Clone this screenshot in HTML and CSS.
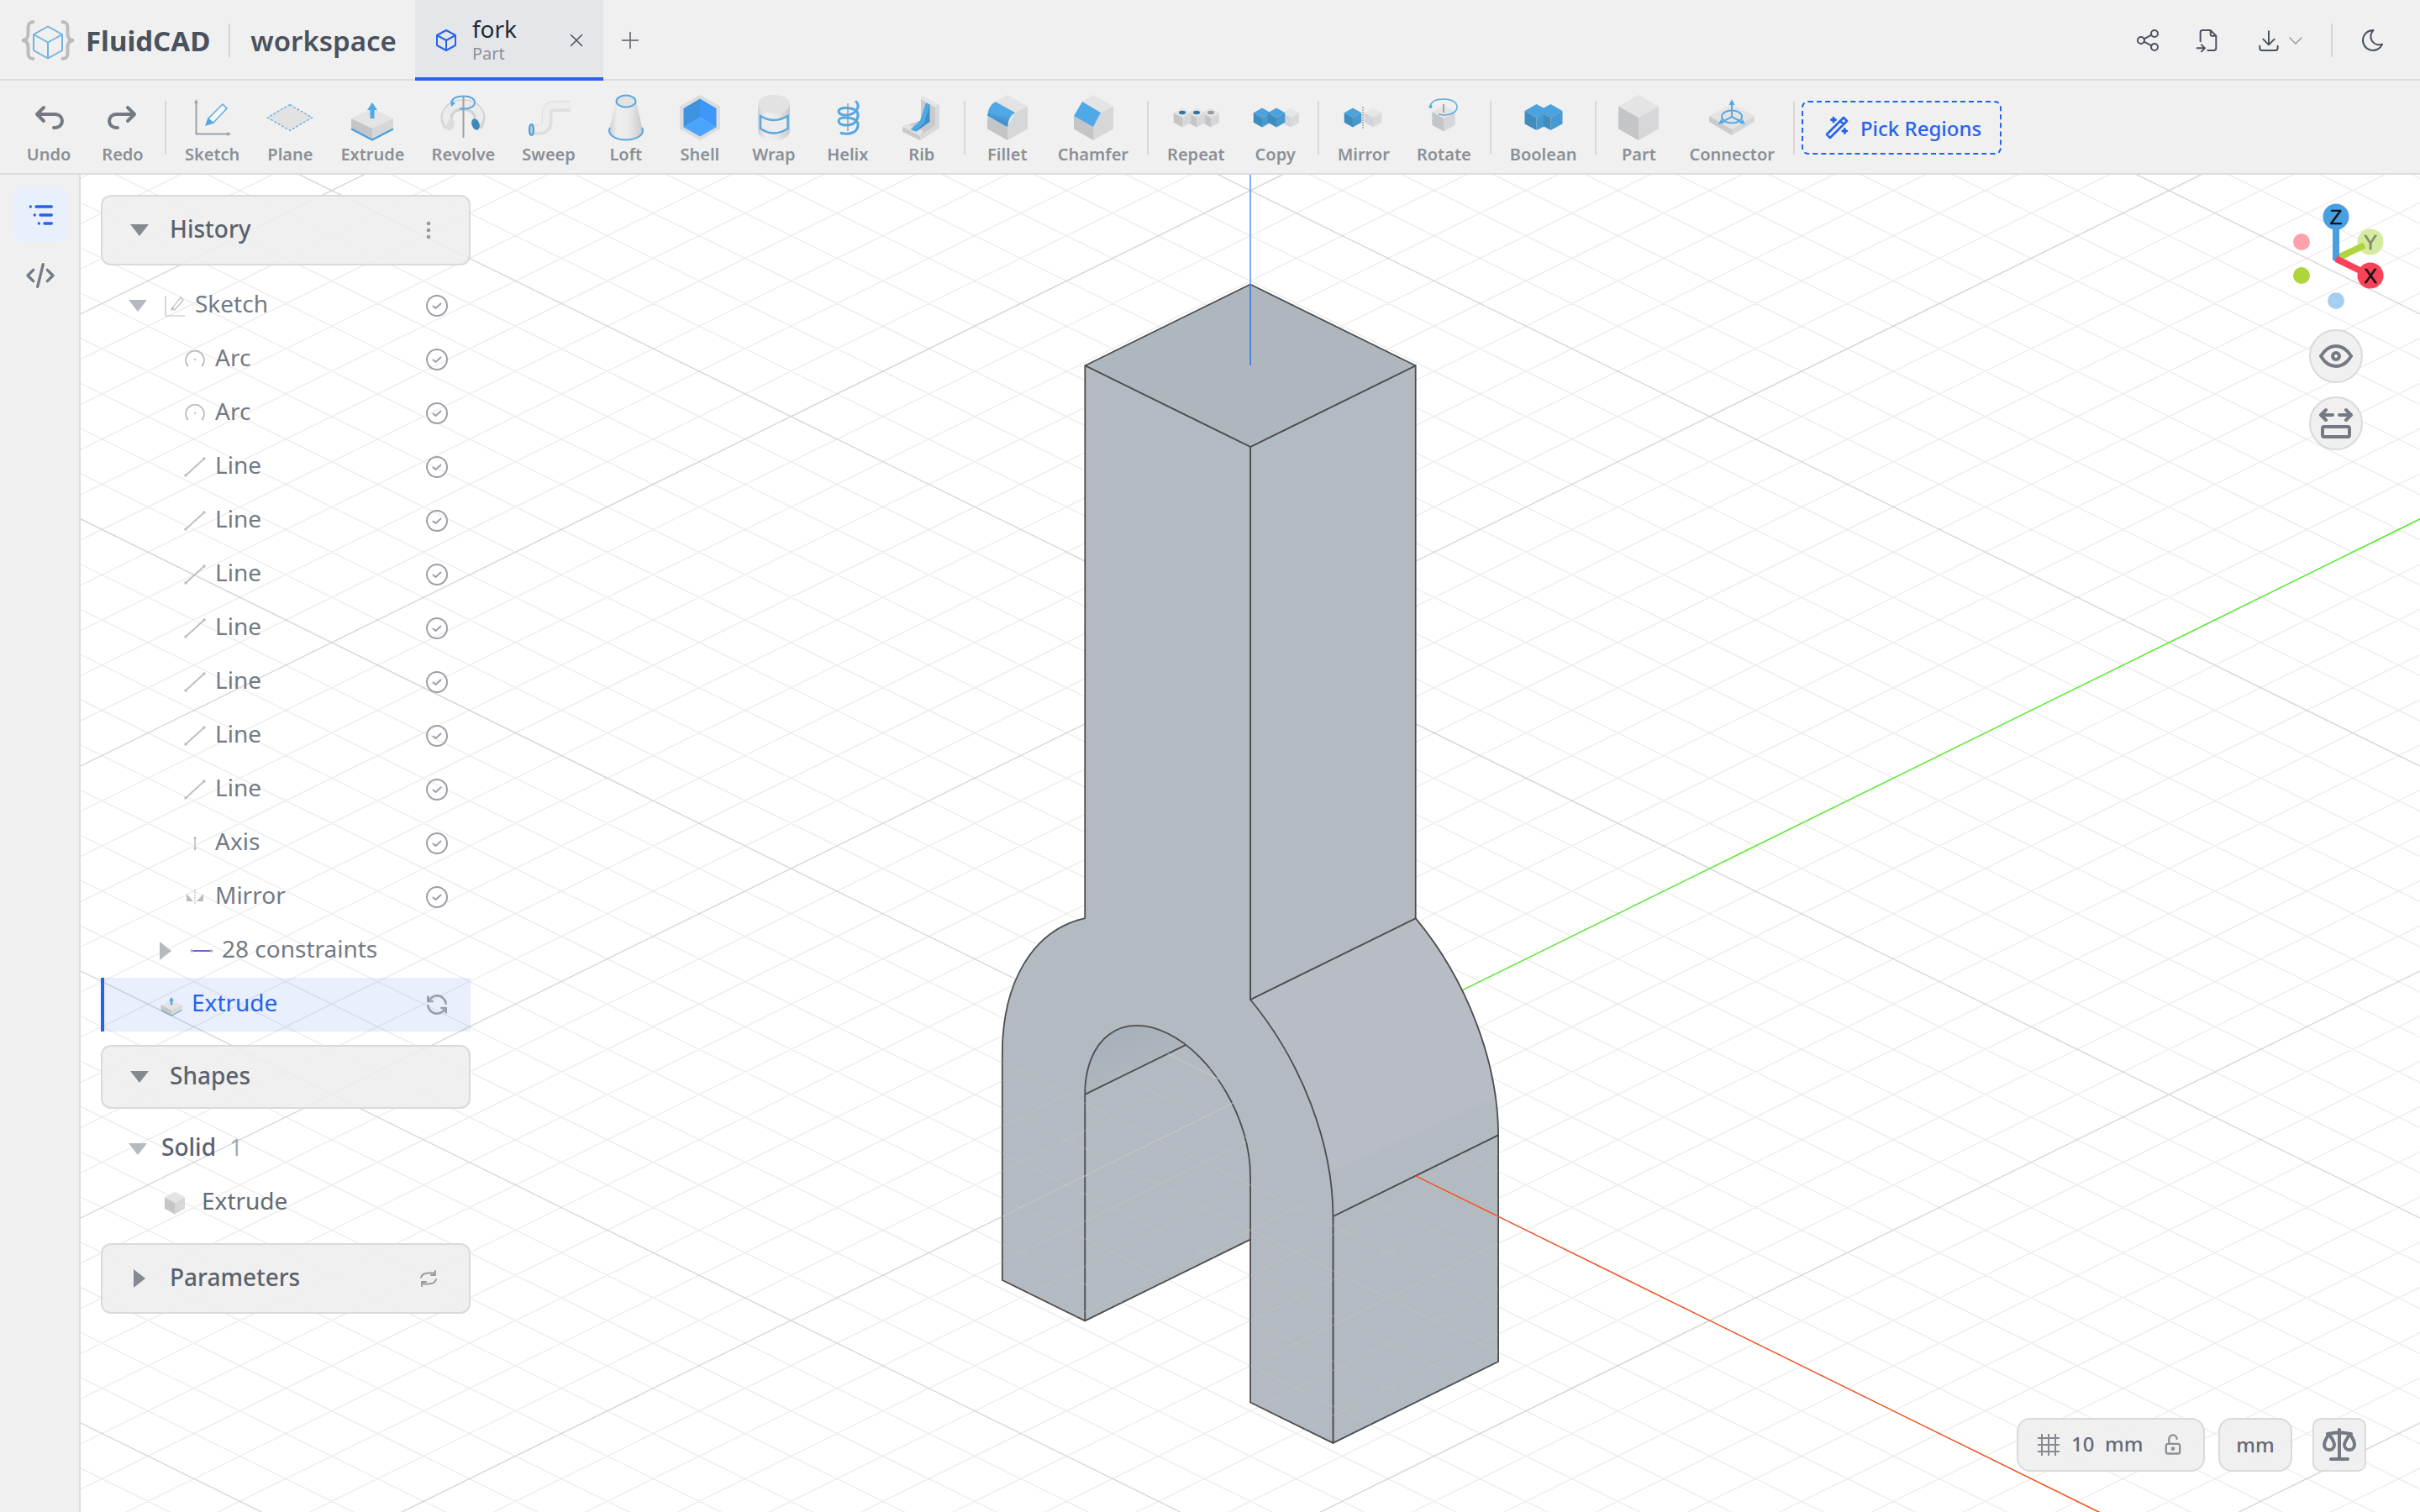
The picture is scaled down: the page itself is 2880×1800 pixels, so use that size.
FILE: index.html
```html
<!DOCTYPE html>
<html lang="en">
<head>
<meta charset="utf-8">
<title>fork - FluidCAD</title>
<meta name="viewport" content="width=device-width, initial-scale=1">
<link rel="stylesheet" href="styles.css">
</head>
<body>
<svg class="defs" aria-hidden="true">
  <defs>
    <linearGradient id="tube" x1="0" x2="1" y1="0" y2="0">
      <stop offset="0" stop-color="#cfcfd0"/><stop offset=".25" stop-color="#efefef"/><stop offset=".6" stop-color="#e9e9e9"/><stop offset="1" stop-color="#c9c9cb"/>
    </linearGradient>
    <linearGradient id="filletBlue" x1=".7" y1="0" x2=".4" y2="1">
      <stop offset="0" stop-color="#4fa9e6"/><stop offset=".5" stop-color="#4fa9e6"/><stop offset="1" stop-color="#3580b8"/>
    </linearGradient>
    <linearGradient id="vault" x1="0" y1="0" x2=".5" y2="1">
      <stop offset="0" stop-color="#a7b0b8"/><stop offset=".45" stop-color="#a9b2ba"/><stop offset="1" stop-color="#b2b9c0"/>
    </linearGradient>
  </defs>
  <symbol id="cube" viewBox="0 0 56 56">
    <path fill="#e4e4e4" d="M28 1 52 14.5 28 28 4 14.5z"/><path fill="#c4c5c8" d="M4 14.5 28 28V55L4 41.5z"/><path fill="#d6d7d9" d="M52 14.5 28 28V55L52 41.5z"/>
  </symbol>
  <symbol id="cube-blue" viewBox="0 0 56 56">
    <path fill="#4ca2dc" d="M28 1 52 14.5 28 28 4 14.5z"/><path fill="#418cbe" d="M4 14.5 28 28V55L4 41.5z"/><path fill="#4899d0" d="M52 14.5 28 28V55L52 41.5z"/>
  </symbol>
  <symbol id="cube-soft" viewBox="0 0 56 56">
    <path fill="#e6e6e6" d="M28 1 52 14.5 28 28 4 14.5z"/><path fill="#d2d4d9" d="M4 14.5 28 28V55L4 41.5z"/><path fill="#dadadc" d="M52 14.5 28 28V55L52 41.5z"/>
  </symbol>
  <symbol id="extrude" viewBox="0 0 56 56">
    <path fill="#e4e4e4" d="M28 17 53 29 28 41 3 29z"/><path fill="#c4c5c8" d="M3 29 28 41V54L3 41.5z"/><path fill="#d6d7d9" d="M53 29 28 41V54L53 41.5z"/>
    <path fill="none" stroke="#4a9fd8" stroke-width="2" d="M3 41.5 28 54.5 53 41.5"/><path fill="#4fa9e6" d="M28 10 34 19H30.500V29H25.500V19H22z"/>
  </symbol>
  <symbol id="check" viewBox="0 0 32 32">
    <circle cx="16" cy="16" r="12"/><path d="M11.500 16.500 14.500 19 20.500 13.500"/>
  </symbol>
  <symbol id="line" viewBox="0 0 28 28">
    <path stroke-width="1.800" d="M3 24 25 4"/><circle cx="3" cy="24" r="1"/><circle cx="25" cy="4" r="1"/>
  </symbol>
  <symbol id="arc" viewBox="0 0 28 28">
    <path stroke-width="1.800" d="M5 21A11 11 0 1 1 23 21"/><circle cx="5" cy="21" r=".6"/><circle cx="23" cy="21" r=".6"/><circle cx="14" cy="14" r=".4"/>
  </symbol>
</svg>

<header class="titlebar">
  <a class="brand" href="#">
    <svg class="logo" viewBox="0 0 66 50" aria-hidden="true">
      <path fill="none" stroke="#bcbcbc" stroke-width="4" d="M17 3C11 3 9.500 5 9.500 10V17C9.500 22 7 25 2 25 7 25 9.500 28 9.500 33V40C9.500 45 11 47 17 47M49 3C55 3 56.500 5 56.500 10V17C56.500 22 59 25 64 25 59 25 56.500 28 56.500 33V40C56.500 45 55 47 49 47"/>
      <path fill="none" stroke="#6fb3e0" stroke-width="2" stroke-linejoin="round" d="M33 8.500 50 18V37L33 46.500 16 37V18zM16 18 33 27.500 50 18M33 27.500V46.500"/>
    </svg>
    <span>FluidCAD</span>
  </a>
  <span class="divider"></span>
  <span class="workspace">workspace</span>
  <div class="tab">
    <svg class="tab-icon" viewBox="0 0 26 28" aria-hidden="true"><path fill="none" stroke="#2563eb" stroke-width="2" stroke-linejoin="round" d="M13 2 24 8V20L13 26 2 20V8zM2 8 13 14 24 8M13 14V26"/></svg>
    <span class="tab-text"><span class="tab-name">fork</span><span class="tab-kind">Part</span></span>
    <button class="tab-close" aria-label="Close tab"><svg viewBox="0 0 24 24"><path d="M5.500 5.500 18.500 18.500M18.500 5.500 5.500 18.500"/></svg></button>
  </div>
  <button class="tab-add" aria-label="New tab"><svg viewBox="0 0 24 24"><path d="M12 5V19M5 12H19"/></svg></button>
  <div class="title-actions">
    <button class="head-btn" aria-label="Share"><svg viewBox="0 0 24 24"><circle cx="6" cy="12" r="3"/><circle cx="18" cy="6" r="3"/><circle cx="18" cy="18" r="3"/><path d="M8.700 10.700 15.300 7.300M8.700 13.300 15.300 16.700"/></svg></button>
    <button class="head-btn" aria-label="Import"><svg viewBox="0 0 24 24"><path d="M14 3v4a1 1 0 0 0 1 1h4M5 13V5a2 2 0 0 1 2-2h7l5 5v11a2 2 0 0 1-2 2h-5.500M2 19h7m-3-3 3 3-3 3"/></svg></button>
    <button class="head-btn" aria-label="Export"><svg viewBox="0 0 24 24"><path d="M4 17v2a2 2 0 0 0 2 2h12a2 2 0 0 0 2-2v-2M7 11l5 5 5-5M12 4v12"/></svg></button>
    <button class="head-more" aria-label="Export options"><svg viewBox="0 0 24 24"><path d="m5 9 7 7 7-7"/></svg></button>
    <span class="divider small"></span>
    <button class="head-btn" aria-label="Dark mode"><svg viewBox="0 0 24 24"><path d="M12 3h.393a7.500 7.500 0 0 0 7.920 12.446A9 9 0 1 1 12 2.992z"/></svg></button>
  </div>
</header>

<nav class="toolbar" aria-label="Modeling tools">
  <button class="tool"><svg class="step" viewBox="0 0 28 28"><path d="m11 16-4-4 4-4M7 12h11a4 4 0 1 1 0 8h-1"/></svg>Undo</button>
  <button class="tool"><svg class="step" viewBox="0 0 28 28"><path d="m17 16 4-4-4-4M21 12H10a4 4 0 1 0 0 8h1"/></svg>Redo</button>
  <span class="sep"></span>
  <button class="tool"><svg viewBox="0 0 56 56"><path fill="none" stroke="#9ca1ad" stroke-width="2" d="M8.500 9V47.500H47"/><path fill="#9ca1ad" d="M8.500 6 11 11H6zM50 47.500 45 45V50z"/><path fill="#f4f8fb" stroke="#5aa9e0" stroke-width="1.500" d="M23 29 40 12 45 17 29 34"/><path fill="#4fa9e6" d="M22.500 28 30 34.500 19 38z"/></svg>Sketch</button>
  <button class="tool"><svg viewBox="0 0 56 56"><path fill="#e2e2e2" stroke="#72b4e0" stroke-width="1.500" stroke-dasharray="3 2" d="M28 12.500 54.500 28 28 43.500 1.500 28z"/></svg>Plane</button>
  <button class="tool"><svg><use href="#extrude"/></svg>Extrude</button>
  <button class="tool"><svg viewBox="0 0 56 56"><path fill="none" stroke="#d3d3d4" stroke-width="14" d="M12 38C3 24 14 13 28 13S53 24 44 38"/><path fill="none" stroke="#ebebeb" stroke-width="9" d="M11 36C3 23 14 12 28 12S53 23 45 34"/><ellipse cx="13" cy="37" rx="4.500" ry="7" fill="#dcdcdd" transform="rotate(20 13 37)"/><ellipse cx="43" cy="36" rx="4.500" ry="7" fill="#3f88bb" transform="rotate(-20 43 36)"/><path stroke="#9ca1ad" stroke-width="2" d="M28.500 3V52"/><path fill="none" stroke="#5aa9e0" stroke-width="2" d="M15 12C13 5 21 2.500 29 2.500 37 2.500 42 5.500 42 10S37 17.500 29 17.500H24"/><path fill="#4fa9e6" d="m13 8 6 3-5 4z"/></svg>Revolve</button>
  <button class="tool"><svg viewBox="0 0 56 56"><path fill="none" stroke="#dedede" stroke-width="13" d="M8 42.500H16Q26 42.500 26 33V24Q26 14.500 36 14.500H53.500"/><path fill="none" stroke="#ededed" stroke-width="8" d="M8 41H15Q25 41 25 31V23Q25 13.500 35 13.500H53.500"/><ellipse cx="7.500" cy="42.500" rx="2.500" ry="6.500" fill="#b9d0df" stroke="#4a9fd8" stroke-width="2"/></svg>Sweep</button>
  <button class="tool"><svg viewBox="0 0 56 56"><path fill="url(#tube)" d="M16 8.500H40L48 43A20 11 0 0 1 8 43z"/><ellipse cx="28" cy="8.500" rx="11.500" ry="7" fill="#e2e2e2" stroke="#5aa9e0" stroke-width="2"/><path fill="none" stroke="#5aa9e0" stroke-width="2" d="M9 40C5 48 15 54.500 28 54.500S51 48 47 40"/></svg>Loft</button>
  <button class="tool"><svg viewBox="0 0 56 56"><path fill="#dcdcdd" d="M28 1 52 14.500V41.500L28 55 4 41.500V14.500z"/><path fill="#3d93dd" d="M28 5.500 8.500 17V39.500L28 28z"/><path fill="#3f97fb" d="M28 5.500 47.500 17V39.500L28 28z"/><path fill="#4aa5fc" d="M28 28 47.500 39.500 28 50.500 8.500 39.500z"/></svg>Shell</button>
  <button class="tool"><svg viewBox="0 0 56 56"><path fill="url(#tube)" d="M9 12H47V44A19 11 0 0 1 9 44z"/><ellipse cx="28" cy="12" rx="19" ry="11" fill="#e2e2e2"/><path fill="#ececec" stroke="#5aa9e0" stroke-width="2.500" d="M12 26Q28 36 44.500 26V41Q28 52 12 41z"/></svg>Wrap</button>
  <button class="tool"><svg viewBox="0 0 56 56"><path stroke="#b0b3ba" stroke-width="2" d="M28 11V44"/><g fill="none" stroke="#56a8e0" stroke-width="3" stroke-linecap="round"><path d="M38 9C44 16 36 25 26 25 15 25 14 17 24 16.500 33 16 41 19 40 26"/><path d="M40 26C39 33 34 37 26 37 15 37 14 28 24 28 34 28 41 31 40 38 39 46 30 48.500 20 46.500"/></g></svg>Helix</button>
  <button class="tool"><svg viewBox="0 0 56 56"><path fill="#c9cacd" d="M27 1.500V31L5 39V45L26 55 49 40V13z"/><path fill="#e5e5e5" d="M27 1.500 49 12.500 44 16 27 6z"/><path fill="#d9dadc" d="M49 13V40L26 55V50L44 37V15z"/><path fill="#e2e2e3" d="M5 39 10 35.500 30 44 26 50z"/><path fill="#3e8dc4" d="M33 10.500 37.500 12.500V33L21.500 44.500 15 42 26 32z"/><path fill="#4fa9e6" d="M33 10.500 26 32 15 42 20 44.500 31 34 37.500 13z"/></svg>Rib</button>
  <span class="sep"></span>
  <button class="tool"><svg viewBox="0 0 56 56"><path fill="#e4e4e4" d="M28 1 52 14.500 37 22 13.500 9z"/><path fill="#c4c5c8" d="M4 27 28 38V55L4 41.500z"/><path fill="#d6d7d9" d="M37 22 52 14.500V41.500L28 55V38z"/><path fill="url(#filletBlue)" d="M13.500 9 37 22Q29 27 28 39L4 26Q5 14 13.500 9z"/></svg>Fillet</button>
  <button class="tool"><svg viewBox="0 0 56 56"><path fill="#e4e4e4" d="M28 1 52 14.500 37 22 15 9z"/><path fill="#c4c5c8" d="M5 26 28 38V55L5 41.500z"/><path fill="#d6d7d9" d="M37 22 52 14.500V41.500L28 55V38z"/><path fill="#4fa9e6" d="M15 9 37 22 28 39 5 26z"/></svg>Chamfer</button>
  <span class="sep"></span>
  <button class="tool"><svg viewBox="0 0 56 56"><use href="#cube" x="34" y="16" width="24" height="24"/><use href="#cube" x="17" y="16" width="24" height="24"/><use href="#cube" y="16" width="24" height="24"/><ellipse cx="12" cy="22" rx="4" ry="2.200" fill="#2f75a5"/><ellipse cx="29" cy="22" rx="4" ry="2.200" fill="#2f75a5"/><ellipse cx="46" cy="22" rx="4" ry="2.200" fill="#9b9b9d"/></svg>Repeat</button>
  <button class="tool"><svg viewBox="0 0 56 56"><use href="#cube-soft" x="34" y="16" width="24" height="24"/><use href="#cube-blue" y="16" width="24" height="24"/><use href="#cube-blue" x="17" y="16" width="24" height="24"/></svg>Copy</button>
  <span class="sep"></span>
  <button class="tool"><svg viewBox="0 0 56 56"><use href="#cube-blue" x="3" y="16" width="24" height="24"/><use href="#cube-soft" x="27" y="16" width="24" height="24"/><path stroke="#b9b9bb" stroke-width="2" stroke-dasharray="2 1" d="M27 15V41"/></svg>Mirror</button>
  <button class="tool"><svg viewBox="0 0 56 56"><use href="#cube" x="12" y="13" width="32" height="32"/><path stroke="#a5a6aa" stroke-width="2" d="M28 12V22"/><path fill="none" stroke="#5aa9e0" stroke-width="1.500" d="M12 15C13 9 19 6 28 6 38 6 44 10 44 15.500S37 25 28 25L22 24"/><circle cx="12.500" cy="15" r="2" fill="#4fa9e6"/></svg>Rotate</button>
  <span class="sep"></span>
  <button class="tool"><svg viewBox="0 0 56 56"><path fill="#4ca2dc" d="M19.500 12 28 16.500 36.500 12 50.500 20 36.500 28 28 24 19.500 28 5.500 20z"/><path fill="#418cbe" d="M5.500 20 19.500 28V43L5.500 35.500z"/><path fill="#4899d0" d="M19.500 28 28 23.500V39L19.500 43zM50.500 20 36.500 28V43L50.500 35.500z"/><path fill="#418cbe" d="M28 24 36.500 28V43L28 38.500z"/></svg>Boolean</button>
  <span class="sep"></span>
  <button class="tool"><svg><use href="#cube"/></svg>Part</button>
  <button class="tool"><svg viewBox="0 0 56 56"><path fill="#e4e4e4" d="M28 12 55 26 28 42 1 26z"/><path fill="#c9cacd" d="M1 26 28 42V49L1 33z"/><path fill="#d6d7d9" d="M55 26 28 42V49L55 33z"/><g fill="none" stroke="#5aa9e0" stroke-width="2"><ellipse cx="28" cy="27" rx="12" ry="7.500"/><path d="M28 10V27L15 34M28 27 41 34"/></g><path fill="#4fa9e6" d="M28 6 31.500 13H24.500zM12 36 15 30 19 34.500zM44 36 41 30 37 34.500z"/></svg>Connector</button>
  <span class="sep"></span>
  <button class="pick"><svg viewBox="0 0 24 24"><path d="M6 21 21 6 18 3 3 18zM15 6l3 3M9 3a2 2 0 0 0 2 2 2 2 0 0 0-2 2 2 2 0 0 0-2-2 2 2 0 0 0 2-2M19 13a2 2 0 0 0 2 2 2 2 0 0 0-2 2 2 2 0 0 0-2-2 2 2 0 0 0 2-2"/></svg>Pick Regions</button>
</nav>

<div class="body">
  <aside class="rail">
    <button class="rail-btn active" aria-label="Feature tree"><svg viewBox="0 0 24 24"><path d="M9 6h11M12 12h8M15 18h5M5 6v.010M8 12v.010M11 18v.010"/></svg></button>
    <button class="rail-btn" aria-label="Code"><svg viewBox="0 0 24 24"><path d="m7 8-4 4 4 4M17 8l4 4-4 4M14 4l-4 16"/></svg></button>
  </aside>

  <main class="stage">
    <svg class="scene" viewBox="96 208 2784 1592" preserveAspectRatio="xMidYMid slice" role="img" aria-label="Fork model">
      <defs>
        <clipPath id="below">
          <path d="M1192.800 1254.500 1291.200 1302.900 1411 1244C1455 1275 1488 1333 1488 1400L1586.400 1448.200 1783 1351.400V1621L1586.400 1717.900 1488 1669.500V1475.600L1291.200 1572.400 1192.800 1524z"/>
        </clipPath>
        <g id="grid"><path id="grid-minor"/><path id="grid-major"/></g>
      </defs>
      <use href="#grid"/>
      <path class="axis-y" d="M1488 1303 3088 515.500"/>
      <g class="solid">
        <path class="side" d="M1291.200 1302.900V1203H1488V1475.600L1291.200 1572.400z"/>
        <path fill="url(#vault)" d="M1291.200 1302.900 1411.300 1243.900V1200H1291.200z"/>
        <path class="edge" d="M1291.200 1302.900 1411.300 1243.900M1291.200 1572.400 1488 1475.600"/>
        <path class="round" d="M1488 1190 1684.700 1093.200C1745.600 1166.500 1783.100 1264.900 1783.100 1351.400L1586.400 1448.200C1586.400 1361.700 1548.900 1263.300 1488 1190z"/>
        <path class="side" d="M1583.500 1395.500 1780 1306.500 1783.100 1351.400 1586.400 1448.200z"/>
        <path class="edge" d="M1488 1190 1684.700 1093.200C1745.600 1166.500 1783.100 1264.900 1783.100 1351.400L1586.400 1448.200"/>
        <path class="side edge" d="M1586.400 1448.200 1783.100 1351.400V1621L1586.400 1717.900z"/>
        <path class="side edge" d="M1488 532 1684.700 435.300V1093.200L1488 1190z"/>
        <path class="top edge" d="M1488 338.500 1684.700 435.300 1488 532 1291.300 435.300z"/>
        <path class="side edge" d="M1291.300 435.300 1488 532V1190C1548.900 1263.300 1586.400 1361.700 1586.400 1448.200V1717.900L1488 1669.500V1399.800C1488 1332.900 1443.900 1257 1389.600 1230.300 1335.300 1203.500 1291.200 1236 1291.200 1302.900V1572.400L1192.800 1524V1254.500C1192.800 1168 1230.300 1106.500 1291.200 1093.200z"/>
      </g>
      <use href="#grid" clip-path="url(#below)"/>
      <path class="axis-x" d="M1684.700 1399.800 3088 2090.500"/>
      <path class="axis-z" d="M1488 208V338"/><path class="axis-z on-face" d="M1488 338V435"/>
    </svg>

    <section class="panel" aria-label="Model tree">
      <div class="card"><button class="fold"><svg class="caret" viewBox="0 0 22 22"><path d="M0 4H22L11 18z"/></svg>History</button><button class="card-btn" aria-label="History menu"><svg class="dots" viewBox="0 0 24 24"><circle cx="12" cy="4" r="2.300"/><circle cx="12" cy="12" r="2.300"/><circle cx="12" cy="20" r="2.300"/></svg></button></div>
      <ul class="tree">
        <li class="row group"><svg class="caret" viewBox="0 0 22 22"><path d="M0 4H22L11 18z"/></svg><svg class="glyph thin" viewBox="0 0 28 28"><path d="M3 2V26H26M10 18 21 4 24 7 13 20"/><path class="fill" d="M9 20 10.500 15 14 18z"/></svg><span>Sketch</span><svg class="state"><use href="#check"/></svg></li>
        <li class="row child"><svg class="glyph"><use href="#arc"/></svg><span>Arc</span><svg class="state"><use href="#check"/></svg></li>
        <li class="row child"><svg class="glyph"><use href="#arc"/></svg><span>Arc</span><svg class="state"><use href="#check"/></svg></li>
        <li class="row child"><svg class="glyph"><use href="#line"/></svg><span>Line</span><svg class="state"><use href="#check"/></svg></li>
        <li class="row child"><svg class="glyph"><use href="#line"/></svg><span>Line</span><svg class="state"><use href="#check"/></svg></li>
        <li class="row child"><svg class="glyph"><use href="#line"/></svg><span>Line</span><svg class="state"><use href="#check"/></svg></li>
        <li class="row child"><svg class="glyph"><use href="#line"/></svg><span>Line</span><svg class="state"><use href="#check"/></svg></li>
        <li class="row child"><svg class="glyph"><use href="#line"/></svg><span>Line</span><svg class="state"><use href="#check"/></svg></li>
        <li class="row child"><svg class="glyph"><use href="#line"/></svg><span>Line</span><svg class="state"><use href="#check"/></svg></li>
        <li class="row child"><svg class="glyph"><use href="#line"/></svg><span>Line</span><svg class="state"><use href="#check"/></svg></li>
        <li class="row child"><svg class="glyph" viewBox="0 0 28 28"><path d="M14 8V21"/><path class="fill" d="M14 5 16 9H12zM14 23 12 19H16z"/></svg><span>Axis</span><svg class="state"><use href="#check"/></svg></li>
        <li class="row child"><svg class="glyph" viewBox="0 0 28 28"><path class="fill" d="M4 10V19H12zM24 10V19H16z"/><path stroke-dasharray="1.500 1.500" d="M14 5V23"/></svg><span>Mirror</span><svg class="state"><use href="#check"/></svg></li>
        <li class="row constraints"><svg class="caret" viewBox="0 0 22 22"><path d="M4 0V22L18 11z"/></svg><svg class="glyph" viewBox="0 0 28 28"><path stroke="#7263d0" stroke-width="2" d="M2 14H26"/><circle cx="2.500" cy="14" r="1" stroke="#a9a9b5"/><circle cx="25.500" cy="14" r="1" stroke="#a9a9b5"/></svg><span>28 constraints</span></li>
        <li class="row feature selected"><svg class="pic"><use href="#extrude"/></svg><span>Extrude</span><svg class="state" viewBox="0 0 24 24"><path d="M20 11A8.100 8.100 0 0 0 4.500 9M4 5v4h4M4 13a8.100 8.100 0 0 0 15.500 2M20 19v-4h-4"/></svg></li>
      </ul>
      <div class="card short"><button class="fold"><svg class="caret" viewBox="0 0 22 22"><path d="M0 4H22L11 18z"/></svg>Shapes</button></div>
      <ul class="tree">
        <li class="row group solids"><svg class="caret" viewBox="0 0 22 22"><path d="M0 4H22L11 18z"/></svg><span>Solid</span><span class="count">1</span></li>
        <li class="row shape"><svg class="pic"><use href="#cube"/></svg><span>Extrude</span></li>
      </ul>
      <div class="card"><button class="fold"><svg class="caret" viewBox="0 0 22 22"><path d="M4 0V22L18 11z"/></svg>Parameters</button><button class="card-btn" aria-label="Reset parameters"><svg viewBox="0 0 24 24"><path d="M3 11C4 7 8 5.500 12 5.500H20M20 3v5h-5M21 13c-1 4-5 5.500-9 5.500H4M4 21v-5h5"/></svg></button></div>
    </section>

    <div class="view-tools">
      <svg class="gizmo" viewBox="0 0 128 160" role="img" aria-label="View orientation">
        <circle cx="23" cy="64" r="10" fill="#fda1ab"/><circle cx="23" cy="104" r="10" fill="#aed63c"/><circle cx="64" cy="134" r="10" fill="#a4cff1"/>
        <circle cx="105" cy="64" r="15.500" fill="#d6eaa0"/>
        <path stroke="#aed63c" stroke-width="8" d="M64 84 98 68"/><path stroke="#4a9fe3" stroke-width="8" d="M64 86V34"/><path stroke="#fa4359" stroke-width="8" d="M64 84 105 104"/>
        <circle cx="64" cy="34" r="15.500" fill="#4a9fe3"/><circle cx="105" cy="104" r="15.500" fill="#fa4359"/>
        <text x="64" y="43">Z</text><text x="105" y="73" class="far">Y</text><text x="105" y="113">X</text>
      </svg>
      <button class="round-btn" aria-label="Display"><svg viewBox="0 0 24 24"><circle cx="12" cy="12" r="2"/><path d="M21 12c-2.400 4-5.400 6-9 6s-6.600-2-9-6c2.400-4 5.400-6 9-6s6.600 2 9 6"/></svg></button>
      <button class="round-btn" aria-label="Fit to view"><svg viewBox="0 0 24 24"><path d="M10 7H3l3-3M6 10 3 7M14 7h7l-3-3M18 10l3-3"/><rect x="4" y="14" width="16" height="6" rx="1"/></svg></button>
    </div>

    <footer class="status">
      <div class="chip grid-chip">
        <svg class="hash" viewBox="0 0 28 28"><path d="M1 6H27M1 14H27M1 22H27M6 1V27M14 1V27M22 1V27"/></svg>
        <label class="step-size"><input type="text" value="10" aria-label="Grid spacing">mm</label>
        <button class="lock" aria-label="Lock grid spacing"><svg viewBox="0 0 24 24"><rect x="5" y="11" width="14" height="10" rx="2"/><circle cx="12" cy="16" r="1"/><path d="M8 11V6a4 4 0 0 1 8 0"/></svg></button>
      </div>
      <button class="chip unit">mm</button>
      <button class="chip balance" aria-label="Mass properties"><svg viewBox="0 0 48 48"><path d="M24 6V40M14 41H34M10 11 24 9 38 11M11 12C8 17 6 21 6 24A6 6 0 0 0 18 24C18 21 15 16 12 12M36 12C33 17 30 21 30 24A6 6 0 0 0 42 24C42 21 40 16 37 12"/></svg></button>
    </footer>
  </main>
</div>
<script src="grid.js"></script>
</body>
</html>
```
FILE: styles.css
```css
* { box-sizing: border-box; }

:root {
  --surface: #f0f0f0;
  --line: #dcdcdc;
  --ink: #4a525e;
  --ink-mid: #737a84;
  --ink-soft: #9b9fa6;
  --accent: #2563eb;
  --chip: rgba(238, 238, 238, .87);
}

body {
  margin: 0;
  height: 100vh;
  display: flex;
  flex-direction: column;
  overflow: hidden;
  background: #fff;
  color: var(--ink);
  font-family: "Noto Sans", sans-serif;
  font-size: 28px;
}

button {
  border: 0;
  padding: 0;
  background: none;
  color: inherit;
  font: inherit;
  cursor: pointer;
  display: flex;
  align-items: center;
  justify-content: center;
}

svg { display: block; flex: none; }
.defs { position: absolute; width: 0; height: 0; }

/* Title bar */
.titlebar {
  display: flex;
  align-items: center;
  height: 96px;
  flex: none;
  padding: 2px 28px 0 24px;
  background: var(--surface);
  border-bottom: 2px solid var(--line);
}
.brand {
  display: flex;
  align-items: center;
  gap: 12px;
  color: inherit;
  text-decoration: none;
  font-size: 33px;
  font-weight: 700;
}
.logo { width: 66px; height: 50px; }
.divider { width: 2px; height: 40px; margin: 0 24px 0 22px; background: #d4d4d4; }
.workspace { font-size: 33px; font-weight: 600; }
.tab {
  display: flex;
  align-items: center;
  align-self: stretch;
  width: 224px;
  margin: -2px 0 -2px 22px;
  padding: 4px 20px 0 24px;
  gap: 18px;
  background: #e5e6ea;
  border-bottom: 4px solid var(--accent);
}
.tab-icon { width: 26px; height: 28px; }
.tab-text { display: flex; flex-direction: column; flex: 1; }
.tab-name { font-size: 28px; line-height: 32px; color: #1f2937; }
.tab-kind { font-size: 20px; line-height: 28px; color: #8d9199; }
.tab-close svg { width: 24px; height: 24px; }
.tab-add { width: 64px; height: 64px; color: #7a7f87; }
.tab-add svg { width: 32px; height: 32px; }
.title-actions { display: flex; align-items: center; margin-left: auto; }
.head-btn { width: 56px; height: 56px; margin-right: 16px; }
.head-btn:last-child { margin-right: 0; }
.head-btn svg { width: 32px; height: 32px; }
.head-more { width: 24px; height: 56px; margin: 0 30px 0 -24px; color: var(--ink-soft); }
.head-more svg { width: 24px; height: 24px; }
.title-actions .small { margin: 0 20px 0 0; }
.titlebar button svg {
  fill: none;
  stroke: currentColor;
  stroke-width: 1.5;
  stroke-linecap: round;
  stroke-linejoin: round;
}

/* Tool bar */
.toolbar {
  display: flex;
  align-items: center;
  height: 112px;
  flex: none;
  padding: 2px 14px 0;
  background: var(--surface);
  border-bottom: 2px solid var(--line);
}
.tool {
  flex-direction: column;
  flex: none;
  gap: 2px;
  min-width: 88px;
  padding: 6px 16px 0;
  color: #8b9097;
  font-size: 20px;
  line-height: 28px;
  font-weight: 600;
}
.tool > svg { width: 56px; height: 56px; }
.step {
  fill: none;
  stroke: #747a83;
  stroke-width: 2;
  stroke-linecap: round;
  stroke-linejoin: round;
}
.sep { width: 2px; height: 64px; margin: 0 6px; flex: none; background: #d8d8d8; }
.pick {
  height: 64px;
  padding: 0 22px 0 24px;
  gap: 12px;
  margin-left: 2px;
  border: 2px dashed var(--accent);
  border-radius: 8px;
  color: var(--accent);
  font-size: 24px;
  font-weight: 500;
  white-space: nowrap;
}
.pick svg {
  width: 32px;
  height: 32px;
  fill: none;
  stroke: currentColor;
  stroke-width: 2;
  stroke-linecap: round;
  stroke-linejoin: round;
}

/* Work area */
.body { display: flex; flex: 1; min-height: 0; }
.rail {
  display: flex;
  flex-direction: column;
  align-items: center;
  gap: 8px;
  width: 96px;
  flex: none;
  padding-top: 16px;
  padding-left: 2px;
  background: var(--surface);
  border-right: 2px solid var(--line);
}
.rail-btn { width: 64px; height: 64px; border-radius: 8px; color: var(--ink-mid); }
.rail-btn.active { background: #e9f0fd; color: var(--accent); }
.rail-btn svg {
  width: 40px;
  height: 40px;
  fill: none;
  stroke: currentColor;
  stroke-width: 2;
  stroke-linecap: round;
  stroke-linejoin: round;
}
.stage {
  position: relative;
  flex: 1;
  min-width: 0;
  display: grid;
  grid-template: 1fr auto / auto 1fr auto;
}
.scene { position: absolute; inset: 0; width: 100%; height: 100%; }
#grid path, #grid-minor, #grid-major { fill: none; stroke: #c8c8c8; stroke-width: 1.4; }
#grid-minor { stroke-opacity: .33; }
#grid-major { stroke-opacity: .75; }
.axis-x, .axis-y, .axis-z { fill: none; stroke-width: 1.5; }
.axis-x { stroke: #f4511e; }
.axis-y { stroke: #55ee2a; }
.axis-z { stroke: #7fabf0; stroke-width: 2; }
.axis-z.on-face { stroke: #4f86d8; }
.side { fill: #b3bac1; }
.round { fill: #b8bcc4; }
.top { fill: #aeb6be; }
.edge { stroke: #4d4d4d; stroke-width: 1.8; stroke-linejoin: round; }
path.edge:not(.side):not(.top) { fill: none; }

/* Model tree */
.panel {
  position: relative;
  grid-row: 1 / 3;
  align-self: start;
  width: 440px;
  margin: 24px 0 0 24px;
}
.card {
  display: flex;
  align-items: center;
  justify-content: space-between;
  height: 84px;
  padding: 0 32px 0 33px;
  background: var(--chip);
  border: 2px solid #dadada;
  border-radius: 12px;
  color: #5a626d;
  font-weight: 500;
}
.card.short { height: 76px; }
.fold { gap: 25px; line-height: 40px; padding-bottom: 4px; }
.caret { width: 22px; height: 22px; fill: #858a91; }
.fold .caret { margin-top: 4px; }
.card-btn { width: 32px; height: 32px; color: #94989e; }
.card-btn svg { width: 24px; height: 24px; fill: none; stroke: currentColor; stroke-width: 1.8; stroke-linecap: round; stroke-linejoin: round; }
.card-btn .dots { fill: currentColor; stroke: none; }
.tree { list-style: none; margin: 16px 0; padding: 0; }
.row {
  display: flex;
  align-items: center;
  height: 64px;
  padding: 0 24px 0 98px;
  gap: 10px;
  color: var(--ink-mid);
}
.row span { line-height: 40px; padding-bottom: 6px; }
.row .caret { fill: #b5bac1; }
.glyph {
  width: 28px;
  height: 28px;
  fill: none;
  stroke: #bdbdbd;
  stroke-width: 1.5;
}
.glyph.thin { stroke-width: 1.2; }
.glyph .fill { fill: #bdbdbd; stroke: none; }
.pic { width: 28px; height: 28px; }
.state {
  width: 32px;
  height: 32px;
  margin-left: auto;
  fill: none;
  stroke: #9b9fa6;
  stroke-width: 2;
  stroke-linecap: round;
  stroke-linejoin: round;
}
.row.group { padding-left: 33px; }
.row.group .caret { margin-right: 9px; }
.row.constraints { padding-left: 66px; gap: 12px; }
.row.constraints .caret { margin-right: 6px; }
.row.constraints .glyph { margin-right: -2px; }
.row.selected {
  padding-left: 66px;
  border-left: 4px solid var(--accent);
  background: rgba(37, 99, 235, .1);
  color: var(--accent);
}
.row.solids { gap: 8px; color: #5a626d; }
.row.solids span:first-of-type { font-weight: 500; }
.row .count { margin-left: 8px; color: #a6a9af; }
.row.shape { padding-left: 74px; gap: 18px; color: #646b75; }

/* View controls */
.view-tools {
  position: relative;
  grid-column: 3;
  grid-row: 1;
  display: flex;
  flex-direction: column;
  align-items: center;
  gap: 16px;
  margin: 16px 36px 0 0;
}
.gizmo { width: 128px; height: 160px; margin-bottom: -8px; }
.gizmo text { font-family: "Liberation Sans", sans-serif; font-size: 24px; text-anchor: middle; fill: #111; stroke: #111; stroke-width: .5; }
.gizmo .far { fill: #7f8a68; stroke: #7f8a68; }
.round-btn {
  width: 64px;
  height: 64px;
  border: 2px solid #dadada;
  border-radius: 50%;
  background: var(--chip);
}
.round-btn svg, .balance svg {
  width: 48px;
  height: 48px;
  fill: none;
  stroke: #747a83;
  stroke-width: 2;
  stroke-linecap: round;
  stroke-linejoin: round;
}

/* Status chips */
.status {
  position: relative;
  grid-column: 2 / 4;
  grid-row: 2;
  display: flex;
  justify-content: flex-end;
  gap: 16px;
  padding: 0 64px 48px 0;
}
.chip {
  height: 64px;
  background: var(--chip);
  border: 2px solid #dadada;
  border-radius: 16px;
  color: #646b75;
  font-size: 24px;
  font-weight: 500;
}
.grid-chip { display: flex; align-items: center; width: 224px; padding: 0 22px; }
.hash { width: 28px; height: 28px; fill: none; stroke: #858a91; stroke-width: 2; }
.step-size { display: flex; align-items: center; gap: 8px; margin-left: 13px; line-height: 32px; padding-bottom: 2px; }
.step-size input { width: 32px; border: 0; padding: 0; background: none; color: inherit; font: inherit; }
.lock { margin-left: auto; }
.lock svg { width: 28px; height: 28px; fill: none; stroke: #8b9097; stroke-width: 2; stroke-linecap: round; }
.unit { width: 88px; padding-bottom: 2px; }
.balance { width: 64px; margin-left: 8px; border-radius: 10px; }
.balance svg { stroke-width: 4; }
```
FILE: grid.js
```js
// Ground grid: two families of parallel lines around the world origin.
const ORIGIN = { x: 1488, y: 1303 };
const SLOPE = 0.4922;
const STEP = 53.81;
const REACH = 3200;

function gridPath(wanted) {
  let d = "";
  for (let i = -80; i <= 80; i++) {
    if (!wanted(i)) continue;
    const y = ORIGIN.y + i * STEP;
    const rise = REACH * SLOPE;
    d += `M${ORIGIN.x - REACH} ${y - rise}L${ORIGIN.x + REACH} ${y + rise}`;
    d += `M${ORIGIN.x - REACH} ${y + rise}L${ORIGIN.x + REACH} ${y - rise}`;
  }
  return d;
}

document.getElementById("grid-minor").setAttribute("d", gridPath(i => i % 10 !== 0));
document.getElementById("grid-major").setAttribute("d", gridPath(i => i % 10 === 0));
```
